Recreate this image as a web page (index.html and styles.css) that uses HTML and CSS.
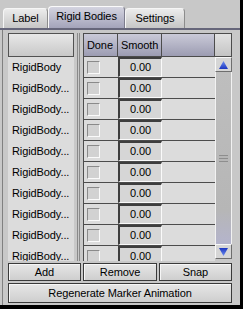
FILE: index.html
```html
<!DOCTYPE html>
<html lang="en">
<head>
    <meta charset="UTF-8">
    <title>Rigid Bodies</title>
    <link rel="stylesheet" href="styles.css">
</head>
<body>
    <div class="window">
        <div class="tabs">
            <div class="tab tab-label">Label</div>
            <div class="tab tab-bodies active">Rigid Bodies</div>
            <div class="tab tab-settings">Settings</div>
        </div>

        <div class="panel">
            <div class="lists">
                <div class="names">
                    <div class="names-head"></div>
                    <div class="name">RigidBody</div>
                    <div class="name">RigidBody...</div>
                    <div class="name">RigidBody...</div>
                    <div class="name">RigidBody...</div>
                    <div class="name">RigidBody...</div>
                    <div class="name">RigidBody...</div>
                    <div class="name">RigidBody...</div>
                    <div class="name">RigidBody...</div>
                    <div class="name">RigidBody...</div>
                    <div class="name">RigidBody...</div>
                </div>

                <div class="divider"><span></span></div>

                <div class="grid">
                    <div class="grid-head">
                        <div class="hcell col-done">Done</div>
                        <div class="hcell col-smooth">Smooth</div>
                        <div class="hcell col-fill"></div>
                        <div class="hcell corner"></div>
                    </div>
                    <div class="grid-body">
                        <div class="rows" id="rows"></div>
                        <div class="scrollbar">
                            <div class="arrow">
                                <svg width="9" height="8" viewBox="0 0 9 8"><polygon points="4.5,0 9,8 0,8" fill="url(#blueUp)"/>
                                    <defs><linearGradient id="blueUp" x1="0" y1="0" x2="0" y2="1"><stop offset="0" stop-color="#6f8ff0"/><stop offset="1" stop-color="#1c36c0"/></linearGradient></defs>
                                </svg>
                            </div>
                            <div class="thumb"><span class="grip"></span></div>
                            <div class="arrow">
                                <svg width="9" height="8" viewBox="0 0 9 8"><polygon points="0,0 9,0 4.5,8" fill="url(#blueDown)"/>
                                    <defs><linearGradient id="blueDown" x1="0" y1="0" x2="0" y2="1"><stop offset="0" stop-color="#1c36c0"/><stop offset="1" stop-color="#6f8ff0"/></linearGradient></defs>
                                </svg>
                            </div>
                        </div>
                    </div>
                </div>
            </div>

            <div class="buttons">
                <div class="btn">Add</div>
                <div class="btn">Remove</div>
                <div class="btn">Snap</div>
                <div class="btn wide">Regenerate Marker Animation</div>
            </div>
        </div>
    </div>

    <script>
        // 10 rigid bodies, all not done, smooth 0.00
        const rowsElement = document.getElementById('rows');
        for (let i = 0; i < 10; i++) {
            const row = document.createElement('div');
            row.className = 'row';
            row.innerHTML = '<div class="col-done"><span class="check"></span></div>' +
                '<div class="col-smooth"><span class="value">0.00</span></div>' +
                '<div class="col-fill"></div>';
            rowsElement.appendChild(row);
        }
    </script>
</body>
</html>
```

FILE: styles.css
```css
body {
    margin: 0;
    background: #000;
    font-family: 'Liberation Sans', Arial, sans-serif;
    font-size: 11px;
    letter-spacing: -0.1px;
    color: #000;
}

.window {
    width: 240px;
    height: 305px;
    background: #c8c8c8;
    overflow: hidden;
}

/* tabs */
.tabs {
    display: flex;
    align-items: flex-end;
    height: 28px;
    padding-left: 3px;
    border-bottom: 2px solid #66667a;
}

.tab {
    box-sizing: border-box;
    height: 20px;
    line-height: 19px;
    text-align: center;
    border: 1px solid #f6f6f6;
    border-right-color: #8c8c8c;
    border-bottom: none;
    border-radius: 4px 4px 0 0;
    background: linear-gradient(#ececec, #c6c6c6);
}

.tab-label { width: 45px; }
.tab-settings { width: 60px; }

.tab.active {
    width: 77px;
    height: 22px;
    line-height: 19px;
    background: linear-gradient(#d4d4e0, #a4a4ba);
    border-color: #fafafa;
    border-right-color: #7c7c8c;
}

/* main panel */
.panel {
    margin-left: 2px;
    border-left: 1px solid #808080;
    padding: 3px 0 0 5px;
    height: 272px;
}

.lists {
    display: flex;
    height: 228px;
    overflow: hidden;
}

.names {
    width: 66px;
    background: #dcdcdc;
}

.names-head {
    box-sizing: border-box;
    height: 24px;
    border: 1px solid #525252;
    background: linear-gradient(#e8e8e8, #c8c8c8);
}

.name {
    height: 21px;
    line-height: 20px;
    padding-left: 4px;
    white-space: nowrap;
}

.divider {
    width: 9px;
    display: flex;
    justify-content: center;
}

.divider span {
    width: 1px;
    border-left: 1px solid #8a8a8a;
    border-right: 1px solid #8a8a8a;
}

/* grid */
.grid {
    width: 149px;
}

.grid-head {
    display: flex;
    gap: 1px;
    height: 22px;
    padding: 1px;
    background: #4c4c4c;
}

.hcell {
    line-height: 22px;
    padding-left: 3px;
    background: linear-gradient(#cacad8, #9c9cb2);
}

.grid-head .col-done { width: 30px; }
.grid-head .col-smooth { width: 40px; }
.grid-head .col-fill { width: 49px; }

.hcell.corner {
    width: 13px;
    background: linear-gradient(#e2e2e2, #c4c4c4);
}

.grid-body {
    display: flex;
}

.rows {
    width: 131px;
    border-left: 1px solid #4c4c4c;
}

.row {
    display: flex;
    height: 20px;
    border-bottom: 1px solid #4c4c4c;
    background: #dcdcdc;
}

.row .col-done {
    width: 34px;
    display: flex;
    align-items: center;
    padding-left: 3px;
    box-sizing: border-box;
}

.check {
    box-sizing: border-box;
    width: 13px;
    height: 13px;
    border: 1px solid #fafafa;
    border-top-color: #8a8a8a;
    border-left-color: #8a8a8a;
    background: #d2d2d2;
}

.row .col-smooth {
    width: 44px;
}

.value {
    display: block;
    box-sizing: border-box;
    height: 20px;
    line-height: 17px;
    text-align: center;
    border: 1px solid #fafafa;
    border-top: 2px solid #3e3e3e;
    border-left: 2px solid #3e3e3e;
    background: #d6d6d6;
}

.row .col-fill {
    flex: 1;
}

/* scrollbar */
.scrollbar {
    width: 17px;
    height: 202px;
    display: flex;
    flex-direction: column;
}

.arrow {
    box-sizing: border-box;
    height: 15px;
    display: flex;
    align-items: center;
    justify-content: center;
    border: 1px solid #6e6e6e;
    border-top-color: #f8f8f8;
    border-left-color: #f8f8f8;
    background: #d6d6d6;
}

.thumb {
    flex: 1;
    display: flex;
    align-items: center;
    justify-content: center;
    border-left: 1px solid #f2f2f2;
    border-right: 1px solid #f2f2f2;
    background: linear-gradient(#bebebe 0%, #b6b6b6 80%, #b4b4cc 100%);
}

.grip {
    width: 9px;
    height: 5px;
    border-top: 1px solid #8e8e8e;
    border-bottom: 1px solid #8e8e8e;
    background: linear-gradient(#b6b6b6 0 2px, #8e8e8e 2px 3px, #b6b6b6 3px);
}

/* buttons */
.buttons {
    display: grid;
    grid-template-columns: 73px 74px 73px;
    gap: 2px 2px;
    width: 224px;
    margin-top: 2px;
}

.btn {
    box-sizing: border-box;
    height: 18px;
    line-height: 16px;
    text-align: center;
    border: 1px solid #3a3a3a;
    background: linear-gradient(#e6e6e6, #cecece);
    box-shadow: inset 1px 1px #f6f6f6;
}

.btn.wide {
    grid-column: 1 / 4;
    height: 20px;
    line-height: 18px;
}
```
